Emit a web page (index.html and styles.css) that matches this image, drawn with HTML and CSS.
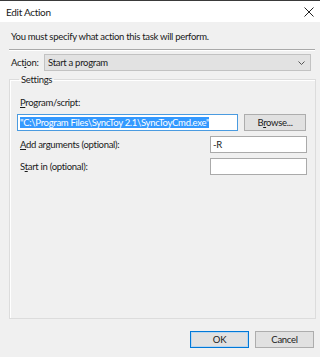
FILE: index.html
```html
<!DOCTYPE html>
<html lang="en">
  <head>
    <meta charset="UTF-8" />
    <meta name="viewport" content="width=device-width, initial-scale=1.0" />
    <title>Edit Action</title>
    <link rel="stylesheet" href="styles.css">
  </head>
  <body>
    <div class="window">
      <div class="titlebar">
        <span class="title">Edit Action</span>
        <svg class="close" width="10" height="10" viewBox="0 0 10 10">
          <path d="M0.5 0.5 L9.5 9.5 M9.5 0.5 L0.5 9.5" stroke="#222" stroke-width="1" fill="none" />
        </svg>
      </div>

      <div class="content">
        <p class="intro">You must specify what action this task will perform.</p>
        <div class="separator"></div>

        <div class="action-row">
          <label class="action-label">Act<u>i</u>on:</label>
          <div class="combo">
            <span>Start a program</span>
            <svg width="7" height="4" viewBox="0 0 7 4">
              <path d="M0.5 0.5 L3.5 3.5 L6.5 0.5" stroke="#555" stroke-width="1" fill="none" />
            </svg>
          </div>
        </div>

        <fieldset class="settings">
          <legend>Settings</legend>
          <div class="field-label first"><u>P</u>rogram/script:</div>
          <div class="program-row">
            <div class="input focused"><span class="selected">"C:\Program Files\SyncToy 2.1\SyncToyCmd.exe"</span></div>
            <button class="btn browse">B<u>r</u>owse...</button>
          </div>
          <div class="arg-row">
            <span class="field-label"><u>A</u>dd arguments (optional):</span>
            <div class="input small">-R</div>
          </div>
          <div class="arg-row">
            <span class="field-label">S<u>t</u>art in (optional):</span>
            <div class="input small"></div>
          </div>
        </fieldset>

        <div class="buttons">
          <button class="btn default">OK</button>
          <button class="btn">Cancel</button>
        </div>
      </div>
    </div>
  </body>
</html>
```

FILE: styles.css
```css
body {
  margin: 0;
  font-family: Lato, "Noto Sans", sans-serif;
  font-size: 9.5px;
  letter-spacing: -0.3px;
  color: #1a1a1a;
  background: #f0f0f0;
}
.window {
  width: 320px;
  height: 357px;
  border-top: 1px solid #3a3a3a;
  box-sizing: border-box;
  background: #f0f0f0;
  display: flex;
  flex-direction: column;
}
.titlebar {
  height: 21px;
  background: #fff;
  display: flex;
  align-items: center;
  justify-content: space-between;
  padding: 0 6px 0 6px;
}
.title {
  font-size: 10px;
}
.close {
  margin-top: 1px;
}
.content {
  padding: 0 4px 0 9px;
  flex: 1;
}
.intro {
  margin: 9px 0 0 2px;
  height: 12px;
  line-height: 12px;
}
.separator {
  margin-top: 6px;
  height: 1px;
  width: 306px;
  background: #a9a9a9;
  border-bottom: 1px solid #fff;
}
.action-row {
  display: flex;
  align-items: center;
  margin-top: 3px;
}
.action-label {
  width: 33px;
  padding-left: 2px;
}
.combo {
  width: 267px;
  height: 17px;
  box-sizing: border-box;
  border: 1px solid #c2c2c2;
  background: #e2e2e2;
  display: flex;
  align-items: center;
  justify-content: space-between;
  padding: 0 5px 0 3px;
}
.settings {
  margin: 3px 0 0 0;
  width: 307px;
  height: 245px;
  box-sizing: border-box;
  border: 1px solid #dcdcdc;
  box-shadow: inset 1px 1px 0 #fff;
  padding: 0 8px 0 7px;
}
.settings legend {
  padding: 0 2px;
  margin-left: 2px;
}
.field-label {
  padding-left: 3px;
  height: 14px;
  line-height: 14px;
}
.field-label.first {
  margin-top: 11px;
}
.program-row {
  display: flex;
  gap: 6px;
  margin-top: 4px;
}
.input {
  height: 17px;
  box-sizing: border-box;
  border: 1px solid #7a7a7a;
  background: #fff;
  padding: 0 2px;
  line-height: 15px;
  white-space: nowrap;
  overflow: hidden;
}
.input.focused {
  width: 221px;
  border-color: #4a9be0;
}
.selected {
  background: #3399ff;
  color: #fff;
}
.input.small {
  width: 97px;
  border-color: #aaa;
}
.arg-row {
  display: flex;
  justify-content: space-between;
  align-items: center;
  margin-top: 5px;
}
.arg-row + .arg-row {
  margin-top: 5px;
}
.btn {
  font-family: inherit;
  font-size: 9.5px;
  letter-spacing: -0.3px;
  height: 17px;
  padding: 0;
  background: #e1e1e1;
  border: 1px solid #adadad;
  color: #1a1a1a;
}
.browse {
  width: 62px;
}
.buttons {
  display: flex;
  justify-content: flex-end;
  gap: 6px;
  margin-top: 12px;
  padding-right: 2px;
}
.buttons .btn {
  width: 59px;
}
.btn.default {
  border-color: #0078d7;
  box-shadow: inset 0 0 0 1px #b8d6f0;
}
```
